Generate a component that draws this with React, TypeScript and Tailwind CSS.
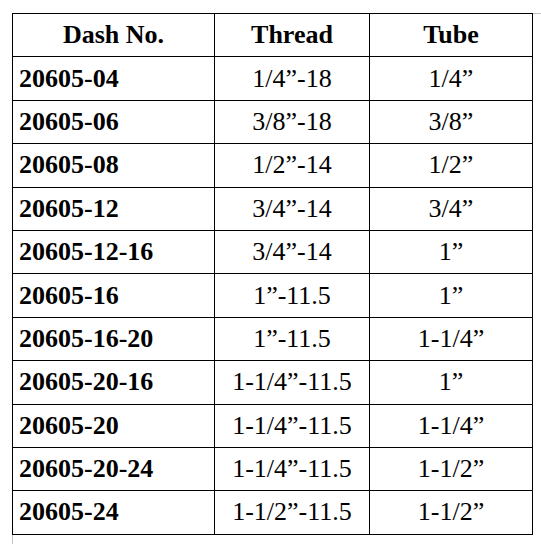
const rows = [
  ["20605-04", "1/4”-18", "1/4”"],
  ["20605-06", "3/8”-18", "3/8”"],
  ["20605-08", "1/2”-14", "1/2”"],
  ["20605-12", "3/4”-14", "3/4”"],
  ["20605-12-16", "3/4”-14", "1”"],
  ["20605-16", "1”-11.5", "1”"],
  ["20605-16-20", "1”-11.5", "1-1/4”"],
  ["20605-20-16", "1-1/4”-11.5", "1”"],
  ["20605-20", "1-1/4”-11.5", "1-1/4”"],
  ["20605-20-24", "1-1/4”-11.5", "1-1/2”"],
  ["20605-24", "1-1/2”-11.5", "1-1/2”"],
];

export default function App() {
  return (
    <main className="min-h-screen bg-white pt-[13px] pl-[12px] text-black font-['Liberation_Serif','Times_New_Roman',serif] text-[26px]">
      <div className="flex items-start">
        {/* spec table */}
        <table className="table-fixed border-collapse w-[520px]">
          <colgroup>
            <col className="w-[202px]" />
            <col className="w-[155px]" />
            <col className="w-[163px]" />
          </colgroup>
          <thead>
            <tr className="h-[43.4px]">
              <th className="border border-black font-bold text-center leading-none">Dash No.</th>
              <th className="border border-black font-bold text-center leading-none">Thread</th>
              <th className="border border-black font-bold text-center leading-none">Tube</th>
            </tr>
          </thead>
          <tbody>
            {rows.map(([dash, thread, tube]) => (
              <tr key={dash} className="h-[43.4px]">
                <td className="border border-black font-bold pl-[6px] leading-none">{dash}</td>
                <td className="border border-black text-center leading-none">{thread}</td>
                <td className="border border-black text-center leading-none">{tube}</td>
              </tr>
            ))}
          </tbody>
        </table>
        <div className="h-px w-[10px] bg-[#c4c4c4]" />
      </div>
      <div className="w-px h-[12px] bg-[#c4c4c4]" />
    </main>
  );
}
